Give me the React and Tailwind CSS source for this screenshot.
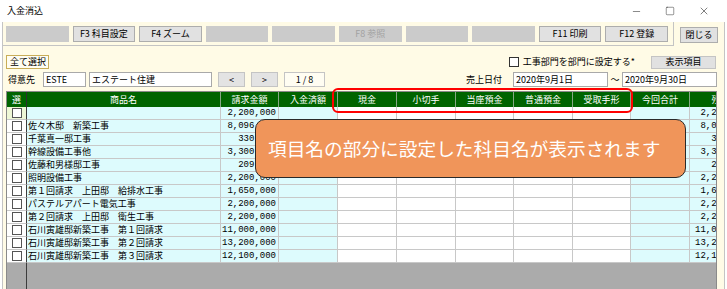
import { Minus, Square, X } from "lucide-react";

const tools = [
  { label: "", on: false },
  { label: "F3 科目設定", on: true },
  { label: "F4 ズーム", on: true },
  { label: "", on: false },
  { label: "", on: false },
  { label: "F8 参照", on: false, dim: true },
  { label: "", on: false },
  { label: "", on: false },
  { label: "F11 印刷", on: true },
  { label: "F12 登録", on: true },
];

const cols = [
  { label: "請求金額", w: "w-[58px]", bg: "bg-[#ddfbfd]" },
  { label: "入金済額", w: "w-[59px]", bg: "bg-[#ddfbfd]" },
  { label: "現金", w: "w-[59px]", bg: "bg-white" },
  { label: "小切手", w: "w-[59px]", bg: "bg-white" },
  { label: "当座預金", w: "w-[58px]", bg: "bg-white" },
  { label: "普通預金", w: "w-[59px]", bg: "bg-white" },
  { label: "受取手形", w: "w-[58px]", bg: "bg-white" },
  { label: "今回合計", w: "w-[59px]", bg: "bg-[#ddfbfd]" },
  { label: "残高", w: "w-[62px]", bg: "bg-[#ddfbfd]" },
];

const rows = [
  ["", "2,200,000"],
  ["佐々木邸　新築工事", "8,096,000"],
  ["千葉真一邸工事", "330,000"],
  ["幹線設備工事他", "3,300,000"],
  ["佐藤和男様邸工事", "209,000"],
  ["照明設備工事", "2,200,000"],
  ["第１回請求　上田邸　給排水工事", "1,650,000"],
  ["パステルアパート電気工事", "2,200,000"],
  ["第２回請求　上田邸　衛生工事", "2,200,000"],
  ["石川寅雄邸新築工事　第１回請求", "11,000,000"],
  ["石川寅雄邸新築工事　第２回請求", "13,200,000"],
  ["石川寅雄邸新築工事　第３回請求", "12,100,000"],
];

const Input = ({ w, children }) => (
  <div className={`${w} h-[15px] bg-white border border-[#a9a9a9] pl-[2px] flex items-center text-[9px]`}>
    {children}
  </div>
);

const Row = ({ name, amount, first }) => (
  <div className="flex h-[13px] shrink-0">
    <div className={`w-[20px] shrink-0 flex items-center justify-center border-r border-r-[#3c3c3c] border-b border-b-[#c8c8c8] ${first ? "bg-[#eef7d6]" : "bg-white"}`}>
      <span className="w-[10px] h-[10px] bg-white border border-[#555]" />
    </div>
    <div className="w-[194px] shrink-0 bg-[#ddfbfd] border-r border-b border-[#c8c8c8] pl-[1px] text-[9px] leading-[12px] whitespace-nowrap overflow-hidden">
      {name}
    </div>
    {cols.map((c, i) => (
      <div
        key={i}
        className={`${c.w} ${c.bg} shrink-0 border-r border-b border-[#c8c8c8] pr-[2px] text-right font-['Liberation_Mono',monospace] text-[9px] leading-[12px] whitespace-nowrap`}
      >
        {i === 0 || i === 8 ? amount : ""}
      </div>
    ))}
  </div>
);

export default function App() {
  return (
    <div className="relative w-[727px] h-[289px] overflow-hidden bg-white flex flex-col text-black font-['Noto_Sans_CJK_JP','Noto_Sans',sans-serif]">
      {/* title bar */}
      <div className="h-[22px] shrink-0 flex items-center bg-white">
        <span className="pl-[7px] text-[9px]">入金消込</span>
        <div className="ml-auto flex items-center pr-[6px]">
          <div className="w-[34px] flex justify-center"><Minus size={11} strokeWidth={1} /></div>
          <div className="w-[34px] flex justify-center"><Square size={10} strokeWidth={1} /></div>
          <div className="w-[34px] flex justify-center"><X size={12} strokeWidth={1} /></div>
        </div>
      </div>

      <div className="ml-[2px] w-[723px] flex-1 flex flex-col bg-[#fffbe6] border-l border-r border-[#c4c4c4]">
        {/* toolbar */}
        <div className="h-[24px] shrink-0 flex">
          <div className="w-[671px] h-full border-r border-b border-[#c4c4c4] pl-[3px] pt-[1px] flex items-center">
            <div className="w-[662px] grid grid-cols-10 gap-[4px]">
              {tools.map((t, i) => (
                <div
                  key={i}
                  className={`h-[16px] flex items-center justify-center text-[9px] ${
                    t.on ? "bg-[#e1e1e1] border border-[#adadad]" : "bg-[#cbcbcb]"
                  } ${t.dim ? "text-[#a2a2a2]" : ""}`}
                >
                  {t.label}
                </div>
              ))}
            </div>
          </div>
          <div className="ml-[6px] mt-[5px] w-[38px] h-[16px] bg-[#e1e1e1] border border-[#adadad] flex items-center justify-center text-[9px]">
            閉じる
          </div>
        </div>

        {/* select all / options */}
        <div className="mt-[9px] h-[14px] shrink-0 flex items-center pl-[3px] pr-[8px]">
          <div className="w-[43px] h-[14px] border border-[#c9ad58] bg-[#fffdf2] flex items-center pl-[3px] text-[9px]">全て選択</div>
          <div className="ml-auto flex items-center">
            <span className="w-[10px] h-[10px] bg-white border border-[#333]" />
            <span className="ml-[4px] text-[9px]">工事部門を部門に設定する*</span>
          </div>
          <div className="ml-[16px] w-[65px] h-[13px] bg-[#e1e1e1] border border-[#c4c4c4] flex items-center justify-center text-[9px]">
            表示項目
          </div>
        </div>

        {/* customer / date */}
        <div className="mt-[3px] h-[15px] shrink-0 flex items-center pl-[5px] pr-[7px] text-[9px]">
          <span className="w-[35px]">得意先</span>
          <Input w="w-[43px]">ESTE</Input>
          <div className="ml-[3px]"><Input w="w-[123px]">エステート住建</Input></div>
          <div className="ml-[6px] w-[27px] h-[15px] bg-[#e3e3e3] border border-[#c4c4c4] flex items-center justify-center">&lt;</div>
          <div className="ml-[6px] w-[27px] h-[15px] bg-[#e3e3e3] border border-[#c4c4c4] flex items-center justify-center">&gt;</div>
          <div className="ml-[6px] w-[41px] h-[15px] bg-[#fffdf2] border border-[#c4c4c4] flex items-center justify-center">1 / 8</div>
          <div className="ml-auto flex items-center">
            <span className="w-[47px]">売上日付</span>
            <Input w="w-[95px]">2020年9月1日</Input>
            <span className="w-[14px] text-center">～</span>
            <Input w="w-[95px]">2020年9月30日</Input>
          </div>
        </div>

        {/* grid */}
        <div className="mt-[4px] ml-[3px] w-[711px] flex-1 flex flex-col overflow-hidden bg-[#ababab] border-l border-t border-r border-[#8a8a8a]">
          <div className="flex h-[15px] shrink-0 bg-[#006400] text-white text-[9px] leading-[15px]">
            <div className="w-[20px] shrink-0 text-center border-r border-[#2f2f2f]">選</div>
            <div className="w-[194px] shrink-0 text-center border-r border-[#86a886]">商品名</div>
            {cols.map((c, i) => (
              <div key={i} className={`${c.w} shrink-0 text-center border-r border-[#86a886] whitespace-nowrap`}>
                {c.label}
              </div>
            ))}
          </div>
          {rows.map((r, i) => (
            <Row key={i} name={r[0]} amount={r[1]} first={i === 0} />
          ))}
          <div className="flex-1 flex">
            <div className="w-[20px] border-r border-[#3c3c3c]" />
          </div>
        </div>
      </div>

      {/* red highlight */}
      <div className="absolute left-[332px] top-[88px] w-[301px] h-[25px] border-2 border-[#ff0000] rounded-[6px]" />

      {/* callout */}
      <div className="absolute left-[255px] top-[119px] w-[431px] h-[59px] bg-[#f0955a] border border-[#2a2a2a] rounded-[10px] flex items-center pl-[12px] text-white text-[18.7px]">
        項目名の部分に設定した科目名が表示されます
      </div>
    </div>
  );
}
